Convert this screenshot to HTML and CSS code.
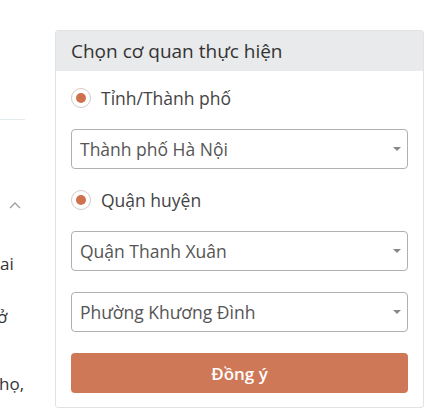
FILE: index.html
```html
<!DOCTYPE html>
<html lang="vi">
<head>
<meta charset="utf-8">
<link rel="stylesheet" href="styles.css">
</head>
<body>
<div class="page">
  <aside class="side">
    <div class="side-line"></div>
    <div class="side-chevron">
      <svg width="12" height="7" viewBox="0 0 12 7"><path d="M1 6 L6 1 L11 6" fill="none" stroke="#9aa0a6" stroke-width="1.3"/></svg>
    </div>
    <div class="side-text t1">ai</div>
    <div class="side-text t2">ở</div>
    <div class="side-text t3">họ,</div>
  </aside>
  <section class="card">
    <div class="card-head">Chọn cơ quan thực hiện</div>
    <div class="card-body">
      <label class="radio-row"><span class="radio"><span class="dot"></span></span><span class="radio-label">Tỉnh/Thành phố</span></label>
      <div class="select"><span>Thành phố Hà Nội</span><span class="caret"></span></div>
      <label class="radio-row"><span class="radio"><span class="dot"></span></span><span class="radio-label">Quận huyện</span></label>
      <div class="select"><span>Quận Thanh Xuân</span><span class="caret"></span></div>
      <div class="select"><span>Phường Khương Đình</span><span class="caret"></span></div>
      <button class="btn">Đồng ý</button>
    </div>
  </section>
</div>
</body>
</html>
```
FILE: styles.css
```css
html, body {
  margin: 0;
  padding: 0;
  background: #fff;
}
body {
  width: 440px;
  height: 412px;
  overflow: hidden;
  font-family: "Open Sans", "Noto Sans", sans-serif;
  color: #444;
}
.page {
  display: flex;
  align-items: flex-start;
}
.side {
  width: 55px;
  flex: none;
  display: flex;
  flex-direction: column;
}
.side-line {
  margin-top: 119px;
  width: 25px;
  height: 1px;
  background: #e4ecef;
}
.side-chevron {
  margin-top: 82px;
  margin-left: 9px;
  height: 8px;
  line-height: 0;
}
.side-text {
  font-size: 17px;
  line-height: 20px;
  color: #333;
}
.t1 { margin-top: 44px; }
.t2 { margin-top: 33px; margin-left: -3px; }
.t3 { margin-top: 47px; margin-left: -1px; }

.card {
  margin-top: 30px;
  width: 367px;
  border: 1px solid #e2e2e2;
  border-radius: 3px;
  background: #fff;
}
.card-head {
  height: 40px;
  line-height: 40px;
  padding-left: 15px;
  background: #e9eaeb;
  font-size: 19px;
  color: #333;
}
.card-body {
  padding: 17px 15px 14px;
  display: flex;
  flex-direction: column;
  gap: 21px;
}
.radio-row {
  display: flex;
  align-items: center;
  height: 20px;
  gap: 10px;
}
.radio {
  width: 18px;
  height: 18px;
  border: 1px solid #d8c8c0;
  border-radius: 50%;
  display: flex;
  align-items: center;
  justify-content: center;
}
.dot {
  width: 10px;
  height: 10px;
  border-radius: 50%;
  background: #d0714e;
}
.radio-label {
  font-size: 17.5px;
  color: #444;
}
.select {
  height: 38px;
  border: 1px solid #b0b0b0;
  border-radius: 4px;
  display: flex;
  align-items: center;
  justify-content: space-between;
  padding: 0 6px 0 8px;
  font-size: 17.5px;
  color: #555;
}
.caret {
  width: 0;
  height: 0;
  border-left: 4px solid transparent;
  border-right: 4px solid transparent;
  border-top: 4px solid #888;
}
.btn {
  height: 40px;
  border: none;
  border-radius: 4px;
  background: #ce7857;
  color: #fff;
  font-family: inherit;
  font-size: 17px;
  font-weight: 600;
  cursor: pointer;
}
```
